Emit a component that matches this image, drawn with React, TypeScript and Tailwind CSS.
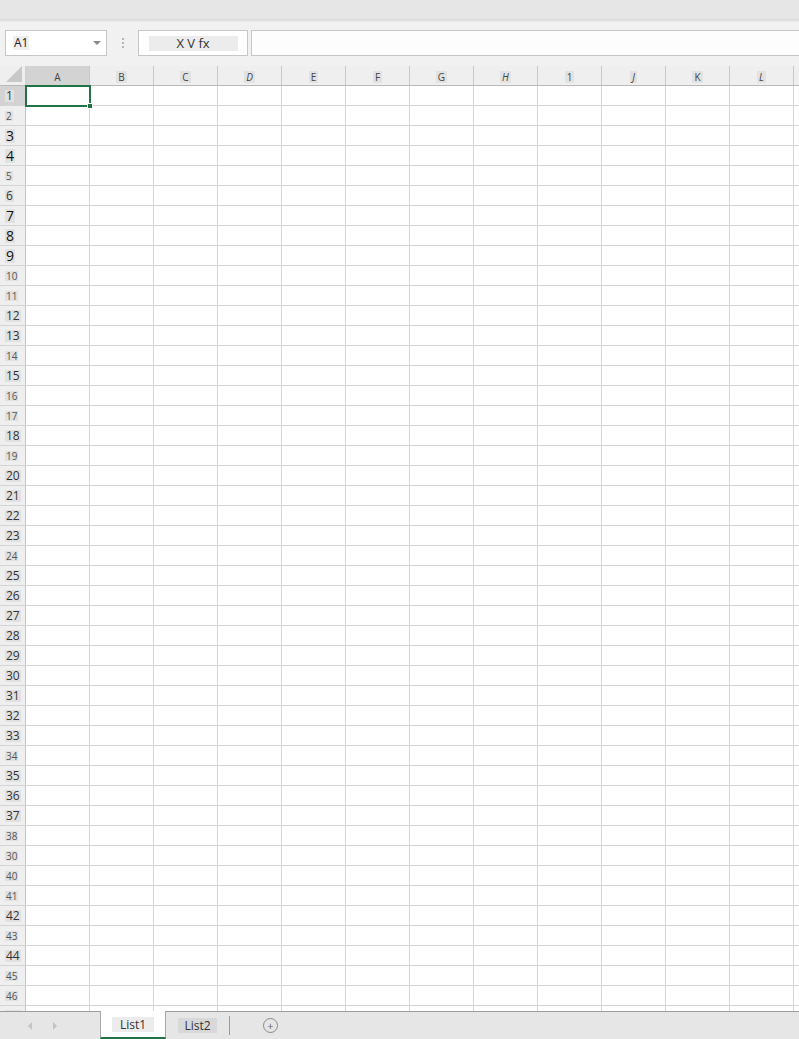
import React from "react";

const COLS = ["A", "B", "C", "D", "E", "F", "G", "H", "1", "J", "K", "L", ""];
const ITALIC = new Set(["D", "H", "J", "L"]);

const BIG = new Set([3, 4, 7, 8, 9]);
const SMALL = new Set([2, 5, 10, 11, 14, 16, 17, 19, 24, 34, 38, 39, 40, 41, 43, 45, 46]);

function rowLabel(n: number) {
  if (n === 39) return "30";
  return String(n);
}

export default function App() {
  const rows = Array.from({ length: 48 }, (_, i) => i + 1);
  return (
    <div
      className="w-[799px] h-[1039px] flex flex-col overflow-hidden bg-white text-[#222]"
      style={{ fontFamily: '"Open Sans", "Noto Sans", "Liberation Sans", sans-serif' }}
    >
      {/* top band */}
      <div className="h-[19px] shrink-0 bg-[#e6e6e6]" />
      <div className="h-[3px] shrink-0 bg-gradient-to-b from-[#d6d6d6] to-[#ededed]" />
      {/* formula bar */}
      <div className="h-[44px] shrink-0 bg-[#f1f1f1] flex items-start pt-[8px] pl-[5px]">
        <div className="w-[102px] h-[26px] bg-white border border-[#c6c6c6] flex items-center pl-[7px] pr-[5px]">
          <span className="text-[12px] leading-[14px] bg-[#efefef] px-[1px]">A1</span>
          <span className="ml-auto w-0 h-0 border-l-[4px] border-r-[4px] border-t-[4px] border-l-transparent border-r-transparent border-t-[#8a8a8a]" />
        </div>
        <div className="w-[31px] h-[26px] flex flex-col items-center justify-center gap-[2px]">
          <span className="w-[2px] h-[2px] bg-[#b5b5b5]" />
          <span className="w-[2px] h-[2px] bg-[#b5b5b5]" />
          <span className="w-[2px] h-[2px] bg-[#b5b5b5]" />
        </div>
        <div className="w-[110px] h-[26px] bg-white border border-[#c6c6c6] flex items-center justify-center">
          <div className="w-[89px] h-[15px] bg-[#ececec] flex items-center justify-center text-[13px] leading-none text-[#333]">
            X V fx
          </div>
        </div>
        <div className="ml-[3px] flex-1 h-[26px] bg-[#fdfdfd] border border-[#c6c6c6] border-r-0" />
      </div>

      {/* grid */}
      <div className="flex-1 min-h-0 overflow-hidden relative">
        {/* column header */}
        <div className="flex h-[20px] bg-[#efefef] border-b border-[#b9b9b9]">
          <div className="w-[26px] shrink-0 h-full border-r border-[#d0d0d0] relative">
            <span
              className="absolute right-[3px] bottom-[3px]"
              style={{ borderBottom: "16px solid #c8c8c8", borderLeft: "16px solid transparent", width: 0, height: 0 }}
            />
          </div>
          {COLS.map((c, i) => (
            <div
              key={i}
              className={`w-[64px] shrink-0 h-full border-r border-[#c9c9c9] flex items-center justify-center ${i === 0 ? "bg-[#d3d3d3]" : ""}`}
            >
              {c && (
                <span
                  className={`text-[10px] leading-[12px] px-[2px] mt-[2px] text-[#444] ${i === 0 ? "" : "bg-[#e2e2e2]"} ${ITALIC.has(c) ? "italic" : ""}`}
                >
                  {c}
                </span>
              )}
            </div>
          ))}
        </div>
        {/* rows */}
        {rows.map((n) => (
          <div key={n} className="flex h-[20px] border-b border-[#d4d4d4]">
            <div
              className={`w-[26px] shrink-0 h-full border-r border-[#c4c4c4] flex items-center pl-[5px] ${n === 1 ? "bg-[#d3d3d3]" : "bg-[#efefef]"}`}
            >
              <span
                className={`leading-none bg-[#e1e1e1] px-[1px] ${
                  BIG.has(n) ? "text-[14px] text-[#111]" : SMALL.has(n) ? "text-[10px] text-[#555]" : "text-[12px] text-[#333]"
                }`}
              >
                {rowLabel(n)}
              </span>
            </div>
            {COLS.map((_, i) => (
              <div key={i} className="w-[64px] shrink-0 h-full border-r border-[#d4d4d4]" />
            ))}
          </div>
        ))}
        {/* selection */}
        <div className="absolute left-[25px] top-[19px] w-[66px] h-[22px] border-2 border-[#217346] pointer-events-none">
          <span className="absolute -right-[4px] -bottom-[4px] w-[6px] h-[6px] bg-[#217346] border border-white" />
        </div>
      </div>

      {/* sheet tabs */}
      <div className="h-[28px] shrink-0 bg-[#e6e6e6] border-t border-[#9c9c9c] flex items-stretch">
        <div className="w-[100px] shrink-0 flex items-center pl-[28px] gap-[21px]">
          <span className="w-0 h-0 border-t-[4px] border-b-[4px] border-r-[4px] border-t-transparent border-b-transparent border-r-[#c4c4c4]" />
          <span className="w-0 h-0 border-t-[4px] border-b-[4px] border-l-[4px] border-t-transparent border-b-transparent border-l-[#c4c4c4]" />
        </div>
        <div className="w-[66px] -mt-[1px] bg-white border-x border-[#a8a8a8] border-b-2 border-b-[#217346] flex items-center justify-center">
          <span className="text-[12px] leading-[15px] bg-[#ececec] px-[8px] text-[#333]">List1</span>
        </div>
        <div className="w-[63px] flex items-center justify-center">
          <span className="text-[12px] leading-[15px] bg-[#d8d8d8] px-[6px] text-[#333]">List2</span>
        </div>
        <div className="flex items-center">
          <span className="w-px h-[19px] bg-[#9a9a9a]" />
        </div>
        <div className="flex items-center pl-[33px]">
          <span className="w-[15px] h-[15px] rounded-full border border-[#8a8a8a] flex items-center justify-center text-[11px] leading-none text-[#666]">
            +
          </span>
        </div>
      </div>
    </div>
  );
}
